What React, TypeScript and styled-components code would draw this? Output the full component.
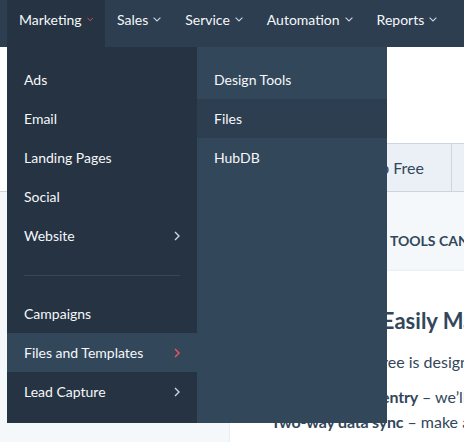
import React from 'react';
import styled, { createGlobalStyle } from 'styled-components';

const GlobalStyle = createGlobalStyle`
  html, body {
    margin: 0;
    padding: 0;
    background: #ffffff;
  }
  body {
    font-family: Lato, "Open Sans", sans-serif;
    -webkit-font-smoothing: antialiased;
  }
  * {
    box-sizing: border-box;
  }
`;

const Down: React.FC<{ active?: boolean }> = ({ active }) => (
  <svg width="8" height="5" viewBox="0 0 8 5" fill="none">
    <path d="M0.6 0.6 L4 4 L7.4 0.6" stroke={active ? '#f2545b' : '#cbd6e2'} strokeWidth="1.1" />
  </svg>
);

const Right: React.FC<{ active?: boolean }> = ({ active }) => (
  <svg width="6" height="10" viewBox="0 0 6 10" fill="none">
    <path d="M1 1 L5 5 L1 9" stroke={active ? '#f2545b' : '#cbd6e2'} strokeWidth="1.4" />
  </svg>
);

const navItems = ['Marketing', 'Sales', 'Service', 'Automation', 'Reports'];

const leftItems: { label: string; sub?: boolean; active?: boolean; divider?: boolean }[] = [
  { label: 'Ads' },
  { label: 'Email' },
  { label: 'Landing Pages' },
  { label: 'Social' },
  { label: 'Website', sub: true },
  { label: '', divider: true },
  { label: 'Campaigns' },
  { label: 'Files and Templates', sub: true, active: true },
  { label: 'Lead Capture', sub: true },
];

const rightItems = ['Design Tools', 'Files', 'HubDB'];

const App: React.FC = () => {
  return (
    <Page>
      <GlobalStyle />
      <NavBar>
        {navItems.map((n, i) => (
          <NavItem key={n} active={i === 0}>
            {n}
            <Down active={i === 0} />
          </NavItem>
        ))}
        <Dropdown>
          <MainMenu>
            {leftItems.map((it, i) =>
              it.divider ? (
                <Divider key={i} />
              ) : (
                <MenuRow key={it.label} active={it.active}>
                  {it.label}
                  {it.sub && <Right active={it.active} />}
                </MenuRow>
              )
            )}
          </MainMenu>
          <SubMenu>
            {rightItems.map((r) => (
              <SubRow key={r} hover={r === 'Files'}>
                {r}
              </SubRow>
            ))}
          </SubMenu>
        </Dropdown>
      </NavBar>

      <Hero>
        <Tabs>
          <Tab>Compare Plans</Tab>
          <Tab wide>Sign Up Free</Tab>
          <Tab>Demo</Tab>
        </Tabs>
      </Hero>

      <Section>
        <Eyebrow>WHAT HUBSPOT’S FREE TOOLS CAN DO</Eyebrow>
        <Card>
          <CardTitle>Organize and Easily Manage Contacts</CardTitle>
          <CardText>HubSpot CRM free is designed for growing teams</CardText>
          <CardLine>
            <b>Automatic data entry</b> – we’ll take care of it
          </CardLine>
          <CardLine>
            <b>Two-way data sync</b> – make a change once
          </CardLine>
        </Card>
      </Section>
    </Page>
  );
};

const Page = styled.div`
  width: 464px;
  height: 442px;
  overflow: hidden;
  background: #ffffff;
`;

const NavBar = styled.nav`
  position: relative;
  z-index: 5;
  height: 47px;
  display: flex;
  align-items: stretch;
  padding-left: 7px;
  background: #2d3e50;
`;

const NavItem = styled.div<{ active?: boolean }>`
  display: flex;
  align-items: center;
  gap: 5px;
  padding: 0 12px 8px;
  font-size: 14px;
  color: #f5f8fa;
  background: ${(p) => (p.active ? '#253342' : 'transparent')};
  &:first-child {
    width: 98px;
  }
`;

const Dropdown = styled.div`
  position: absolute;
  top: 47px;
  left: 7px;
  display: flex;
  height: 376px;
`;

const MainMenu = styled.div`
  width: 190px;
  padding-top: 13px;
  background: #253342;
`;

const MenuRow = styled.div<{ active?: boolean }>`
  height: 39px;
  display: flex;
  align-items: center;
  justify-content: space-between;
  padding: 0 17px;
  font-size: 14px;
  color: #f5f8fa;
  background: ${(p) => (p.active ? '#33475b' : 'transparent')};
`;

const Divider = styled.div`
  height: 1px;
  margin: 20px 17px 18px;
  background: #33475b;
`;

const SubMenu = styled.div`
  width: 190px;
  padding-top: 13px;
  background: #33475b;
`;

const SubRow = styled.div<{ hover?: boolean }>`
  height: 39px;
  display: flex;
  align-items: center;
  padding: 0 17px;
  font-size: 14px;
  color: #f5f8fa;
  background: ${(p) => (p.hover ? '#2d3e50' : 'transparent')};
`;

const Hero = styled.div`
  height: 145px;
  display: flex;
  align-items: flex-end;
  padding-left: 142px;
  border-bottom: 1px solid #cbd6e2;
`;

const Tabs = styled.div`
  display: flex;
  height: 48px;
  border-top: 1px solid #cbd6e2;
`;

const Tab = styled.div<{ wide?: boolean }>`
  display: flex;
  align-items: center;
  padding: ${(p) => (p.wide ? '0 27px 0 38px' : '0 24px')};
  font-size: 16px;
  color: #33475b;
  background: #eaf0f6;
  border-left: 1px solid #cbd6e2;
  white-space: nowrap;
`;

const Section = styled.div`
  height: 250px;
  padding: 40px 0 0 230px;
  background: #f5f8fa;
`;

const Eyebrow = styled.div`
  margin-left: -2px;
  font-size: 14px;
  font-weight: 700;
  color: #33475b;
  white-space: nowrap;
`;

const Card = styled.div`
  margin-top: 22px;
  height: 300px;
  padding: 36px 0 0 41px;
  background: #ffffff;
  box-shadow: 0 0 2px rgba(45, 62, 80, 0.12);
  color: #33475b;
  white-space: nowrap;
`;

const CardTitle = styled.div`
  margin-left: -24px;
  font-size: 22px;
  font-weight: 700;
`;

const CardText = styled.div`
  margin-top: 18px;
  font-size: 16px;
`;

const CardLine = styled.div`
  margin-top: 16px;
  font-size: 16px;
  & b {
    letter-spacing: -0.2px;
  }
  & + & {
    margin-top: 6px;
  }
`;

export default App;
